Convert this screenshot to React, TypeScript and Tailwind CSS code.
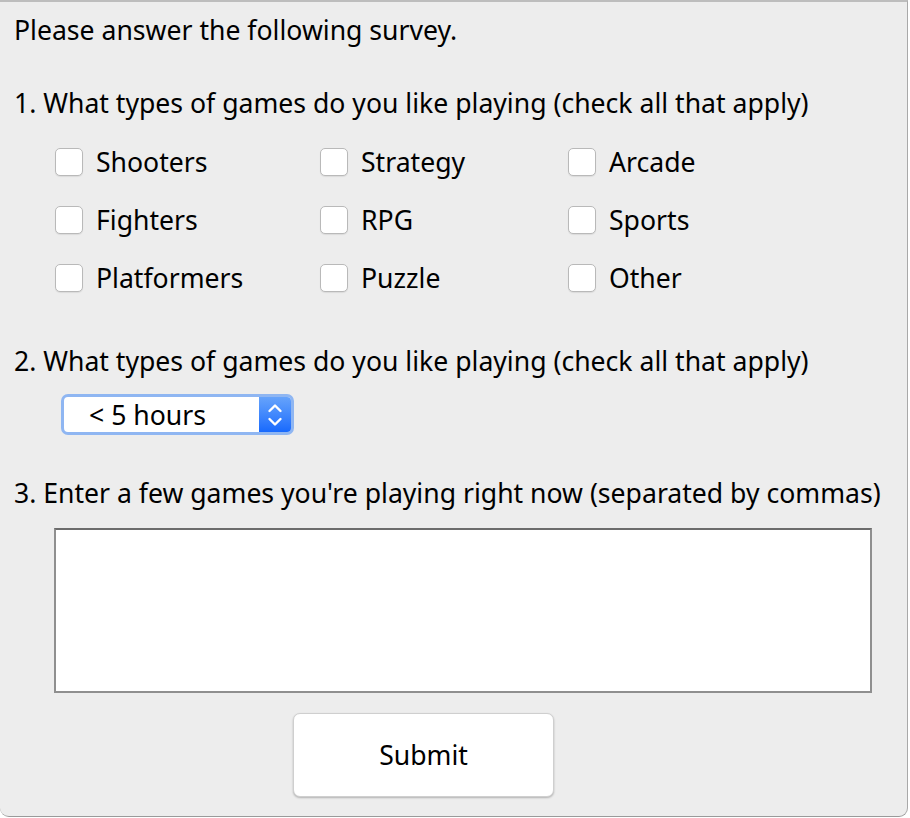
import React from "react";

const font = { fontFamily: '"Noto Sans", "DejaVu Sans", sans-serif' };

function Box({ label }: { label: string }) {
  return (
    <div className="flex items-center h-[28px]">
      <div className="w-[28px] h-[28px] rounded-[5px] bg-white border border-[#b9b9b9] shadow-[0_1px_1px_rgba(0,0,0,0.08)] shrink-0" />
      <span className="ml-[13px] text-[26.6px] leading-[28px] text-black">{label}</span>
    </div>
  );
}

export default function App() {
  const cols = [
    ["Shooters", "Fighters", "Platformers"],
    ["Strategy", "RPG", "Puzzle"],
    ["Arcade", "Sports", "Other"],
  ];
  const rows = [0, 1, 2].map((r) => cols.map((c) => c[r]));
  return (
    <div className="w-[910px] h-[818px] bg-white" style={font}>
      <div className="w-[908px] h-[817px] bg-[#ededed] border-t-2 border-t-[#bdbdbd] border-r border-r-[#a9a9a9] border-b border-b-[#9a9a9a] rounded-b-[9px] flex flex-col">
        <div className="pt-[14px] pl-[14px] text-[26.6px] leading-[28px] text-black">Please answer the following survey.</div>
        <div className="mt-[45px] pl-[14px] text-[26.6px] leading-[28px] text-black">1. What types of games do you like playing (check all that apply)</div>
        <div className="mt-[31px] flex flex-col gap-[30px]">
          {rows.map((row, i) => (
            <div key={i} className="grid grid-cols-[265px_248px_200px] pl-[55px]">
              {row.map((l) => (
                <Box key={l} label={l} />
              ))}
            </div>
          ))}
        </div>
        <div className="mt-[55px] pl-[14px] text-[26.6px] leading-[28px] text-black">2. What types of games do you like playing (check all that apply)</div>
        <div className="mt-[19px] ml-[61px] w-[233px] h-[41px] rounded-[7px] border-[3px] border-[#8fb6f2] flex overflow-hidden bg-white">
          <div className="flex-1 flex items-center pl-[25px] text-[26.6px] leading-[28px] text-black">&lt; 5 hours</div>
          <div className="w-[32px] h-full bg-gradient-to-b from-[#66a3fb] to-[#1769fd] flex items-center justify-center">
            <svg width="18" height="30" viewBox="0 0 18 30" fill="none" stroke="white" strokeWidth="2.4" strokeLinecap="round" strokeLinejoin="round">
              <path d="M3.5 11 L9 5.5 L14.5 11" />
              <path d="M3.5 19 L9 24.5 L14.5 19" />
            </svg>
          </div>
        </div>
        <div className="mt-[44px] pl-[14px] text-[26.6px] leading-[28px] text-black">3. Enter a few games you're playing right now (separated by commas)</div>
        <div className="mt-[21px] ml-[54px] w-[818px] h-[165px] bg-white border-2 border-t-[#6c6c6c] border-l-[#8f8f8f] border-r-[#8f8f8f] border-b-[#8f8f8f]" />
        <div className="mt-[20px] ml-[293px] w-[261px] h-[84px] bg-white rounded-[7px] border border-[#cfcfcf] shadow-[0_1px_2px_rgba(0,0,0,0.25)] flex items-center justify-center text-[26.6px] leading-[28px] text-black">Submit</div>
      </div>
    </div>
  );
}
